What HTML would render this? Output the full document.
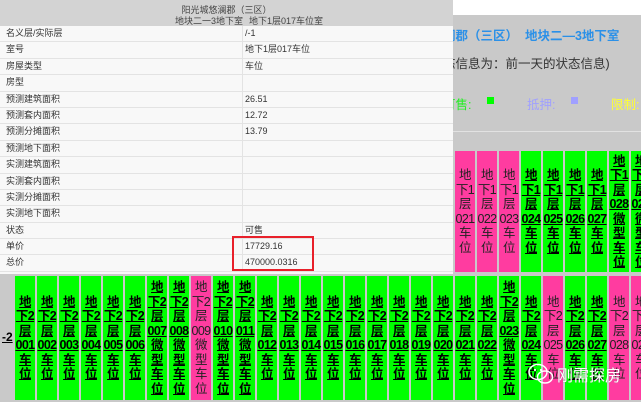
<!DOCTYPE html>
<html><head><meta charset="utf-8"><style>
*{margin:0;padding:0;box-sizing:border-box}
body{width:641px;height:402px;overflow:hidden;position:relative;background:#fff;font-family:"Liberation Sans","Noto Sans CJK SC",sans-serif}
.bg{position:absolute;left:0;top:15px;width:641px;height:387px;background:#c9c9c9}
.hl{position:absolute;left:0;top:131px;width:641px;height:1px;background:#e2e2e2}
.row{position:absolute;left:14px;display:flex}
.c{width:22px;border:1px solid #c9c9c9;background:#00ff00;display:flex;align-items:center;justify-content:center;text-align:center;font-size:12.5px;line-height:14.5px;font-weight:bold;text-decoration:underline;color:#000;letter-spacing:-0.6px;white-space:nowrap}
.p{background:#ff3ca0;font-weight:normal;text-decoration:none;color:#222}
.pop{position:absolute;left:0;top:0;width:453px;height:274px;background:#f8f8f8;z-index:5;font-size:9px;color:#333}
.ph{height:26px;background:#d3d3d3;position:relative}
.r{height:16.4px;border-bottom:1px solid #e3e3e3;position:relative;line-height:15px}
.r span{position:absolute;left:6px}
.r b{position:absolute;left:245px;font-weight:normal}
.r:before{content:"";position:absolute;left:242px;top:0;width:1px;height:16px;background:#e3e3e3}
</style></head><body>
<div class="bg"></div>
<div class="hl"></div>
<div style="position:absolute;left:443px;top:25px;font-size:12.5px;font-weight:bold;color:#2a90e8;white-space:nowrap">澜郡（三区）&nbsp; 地块二—3地下室</div>
<div style="position:absolute;left:443px;top:53px;font-size:12.5px;color:#333;white-space:nowrap">态信息为：前一天的状态信息)</div>
<div style="position:absolute;left:443px;top:94px;font-size:12.5px;color:#22ee22">可售:</div>
<div style="position:absolute;left:487px;top:97px;width:7px;height:7px;background:#00ff00"></div>
<div style="position:absolute;left:527px;top:94px;font-size:12.5px;color:#a0a0ff">抵押:</div>
<div style="position:absolute;left:571px;top:97px;width:7px;height:7px;background:#a0a0ff"></div>
<div style="position:absolute;left:611px;top:94px;font-size:12.5px;color:#ffff33">限制:</div>

<div class="row" style="top:150px;height:123px">
<div class="c">地<br>下1<br>层<br>001<br>车<br>位</div><div class="c">地<br>下1<br>层<br>002<br>车<br>位</div><div class="c">地<br>下1<br>层<br>003<br>车<br>位</div><div class="c">地<br>下1<br>层<br>004<br>车<br>位</div><div class="c">地<br>下1<br>层<br>005<br>车<br>位</div><div class="c">地<br>下1<br>层<br>006<br>车<br>位</div><div class="c">地<br>下1<br>层<br>007<br>车<br>位</div><div class="c">地<br>下1<br>层<br>008<br>车<br>位</div><div class="c">地<br>下1<br>层<br>009<br>车<br>位</div><div class="c">地<br>下1<br>层<br>010<br>车<br>位</div><div class="c">地<br>下1<br>层<br>011<br>车<br>位</div><div class="c">地<br>下1<br>层<br>012<br>车<br>位</div><div class="c">地<br>下1<br>层<br>013<br>车<br>位</div><div class="c">地<br>下1<br>层<br>014<br>车<br>位</div><div class="c">地<br>下1<br>层<br>015<br>车<br>位</div><div class="c">地<br>下1<br>层<br>016<br>车<br>位</div><div class="c">地<br>下1<br>层<br>017<br>车<br>位</div><div class="c">地<br>下1<br>层<br>018<br>车<br>位</div><div class="c">地<br>下1<br>层<br>019<br>车<br>位</div><div class="c">地<br>下1<br>层<br>020<br>车<br>位</div>
<div class="c p">地<br>下1<br>层<br>021<br>车<br>位</div><div class="c p">地<br>下1<br>层<br>022<br>车<br>位</div><div class="c p">地<br>下1<br>层<br>023<br>车<br>位</div>
<div class="c">地<br>下1<br>层<br>024<br>车<br>位</div><div class="c">地<br>下1<br>层<br>025<br>车<br>位</div><div class="c">地<br>下1<br>层<br>026<br>车<br>位</div><div class="c">地<br>下1<br>层<br>027<br>车<br>位</div>
<div class="c">地<br>下1<br>层<br>028<br>微<br>型<br>车<br>位</div><div class="c">地<br>下1<br>层<br>029<br>微<br>型<br>车<br>位</div>
</div>

<div style="position:absolute;left:0;top:275px;width:14px;height:125px;background:#c9c9c9;font-size:12px;font-weight:bold;text-decoration:underline;line-height:125px;padding-left:2px">-2</div>
<div class="row" style="top:275px;height:126px">
<div class="c">地<br>下2<br>层<br>001<br>车<br>位</div><div class="c">地<br>下2<br>层<br>002<br>车<br>位</div><div class="c">地<br>下2<br>层<br>003<br>车<br>位</div><div class="c">地<br>下2<br>层<br>004<br>车<br>位</div><div class="c">地<br>下2<br>层<br>005<br>车<br>位</div><div class="c">地<br>下2<br>层<br>006<br>车<br>位</div>
<div class="c">地<br>下2<br>层<br>007<br>微<br>型<br>车<br>位</div><div class="c">地<br>下2<br>层<br>008<br>微<br>型<br>车<br>位</div><div class="c p">地<br>下2<br>层<br>009<br>微<br>型<br>车<br>位</div><div class="c">地<br>下2<br>层<br>010<br>微<br>型<br>车<br>位</div><div class="c">地<br>下2<br>层<br>011<br>微<br>型<br>车<br>位</div>
<div class="c">地<br>下2<br>层<br>012<br>车<br>位</div><div class="c">地<br>下2<br>层<br>013<br>车<br>位</div><div class="c">地<br>下2<br>层<br>014<br>车<br>位</div><div class="c">地<br>下2<br>层<br>015<br>车<br>位</div><div class="c">地<br>下2<br>层<br>016<br>车<br>位</div><div class="c">地<br>下2<br>层<br>017<br>车<br>位</div><div class="c">地<br>下2<br>层<br>018<br>车<br>位</div><div class="c">地<br>下2<br>层<br>019<br>车<br>位</div><div class="c">地<br>下2<br>层<br>020<br>车<br>位</div><div class="c">地<br>下2<br>层<br>021<br>车<br>位</div><div class="c">地<br>下2<br>层<br>022<br>车<br>位</div>
<div class="c">地<br>下2<br>层<br>023<br>微<br>型<br>车<br>位</div><div class="c">地<br>下2<br>层<br>024<br>车<br>位</div><div class="c p">地<br>下2<br>层<br>025<br>车<br>位</div><div class="c">地<br>下2<br>层<br>026<br>车<br>位</div><div class="c">地<br>下2<br>层<br>027<br>车<br>位</div><div class="c p">地<br>下2<br>层<br>028<br>车<br>位</div><div class="c p">地<br>下2<br>层<br>029<br>车<br>位</div>
</div>

<div class="pop">
<div class="ph">
<div style="position:absolute;left:0;width:453px;top:3px;text-align:center;color:#444">阳光城悠澜郡（三区）</div>
<div style="position:absolute;left:175px;top:14px;color:#444">地块二一3地下室</div>
<div style="position:absolute;left:249px;top:14px;color:#444">地下1层017车位室</div>
</div>
<div class="r"><span>名义层/实际层</span><b>/-1</b></div>
<div class="r"><span>室号</span><b>地下1层017车位</b></div>
<div class="r"><span>房屋类型</span><b>车位</b></div>
<div class="r"><span>房型</span></div>
<div class="r"><span>预测建筑面积</span><b>26.51</b></div>
<div class="r"><span>预测套内面积</span><b>12.72</b></div>
<div class="r"><span>预测分摊面积</span><b>13.79</b></div>
<div class="r"><span>预测地下面积</span></div>
<div class="r"><span>实测建筑面积</span></div>
<div class="r"><span>实测套内面积</span></div>
<div class="r"><span>实测分摊面积</span></div>
<div class="r"><span>实测地下面积</span></div>
<div class="r"><span>状态</span><b>可售</b></div>
<div class="r"><span>单价</span><b>17729.16</b></div>
<div class="r"><span>总价</span><b>470000.0316</b></div>
<div style="position:absolute;left:232px;top:236px;width:82px;height:35px;border:2px solid #e8202a"></div>
</div>

<svg style="position:absolute;left:528px;top:363px" width="26" height="22" viewBox="0 0 26 22"><ellipse cx="10" cy="9" rx="9" ry="7.5" fill="none" stroke="#fff" stroke-width="1.5"/><ellipse cx="17" cy="14" rx="7.5" ry="6" fill="none" stroke="#fff" stroke-width="1.5"/><circle cx="7" cy="7" r="1.1" fill="#fff"/><circle cx="13" cy="7" r="1.1" fill="#fff"/></svg>
<div style="position:absolute;left:557px;top:362px;font-size:16px;color:#fff;white-space:nowrap;text-shadow:0 0 1px #888">刚需探房</div>
</body></html>
